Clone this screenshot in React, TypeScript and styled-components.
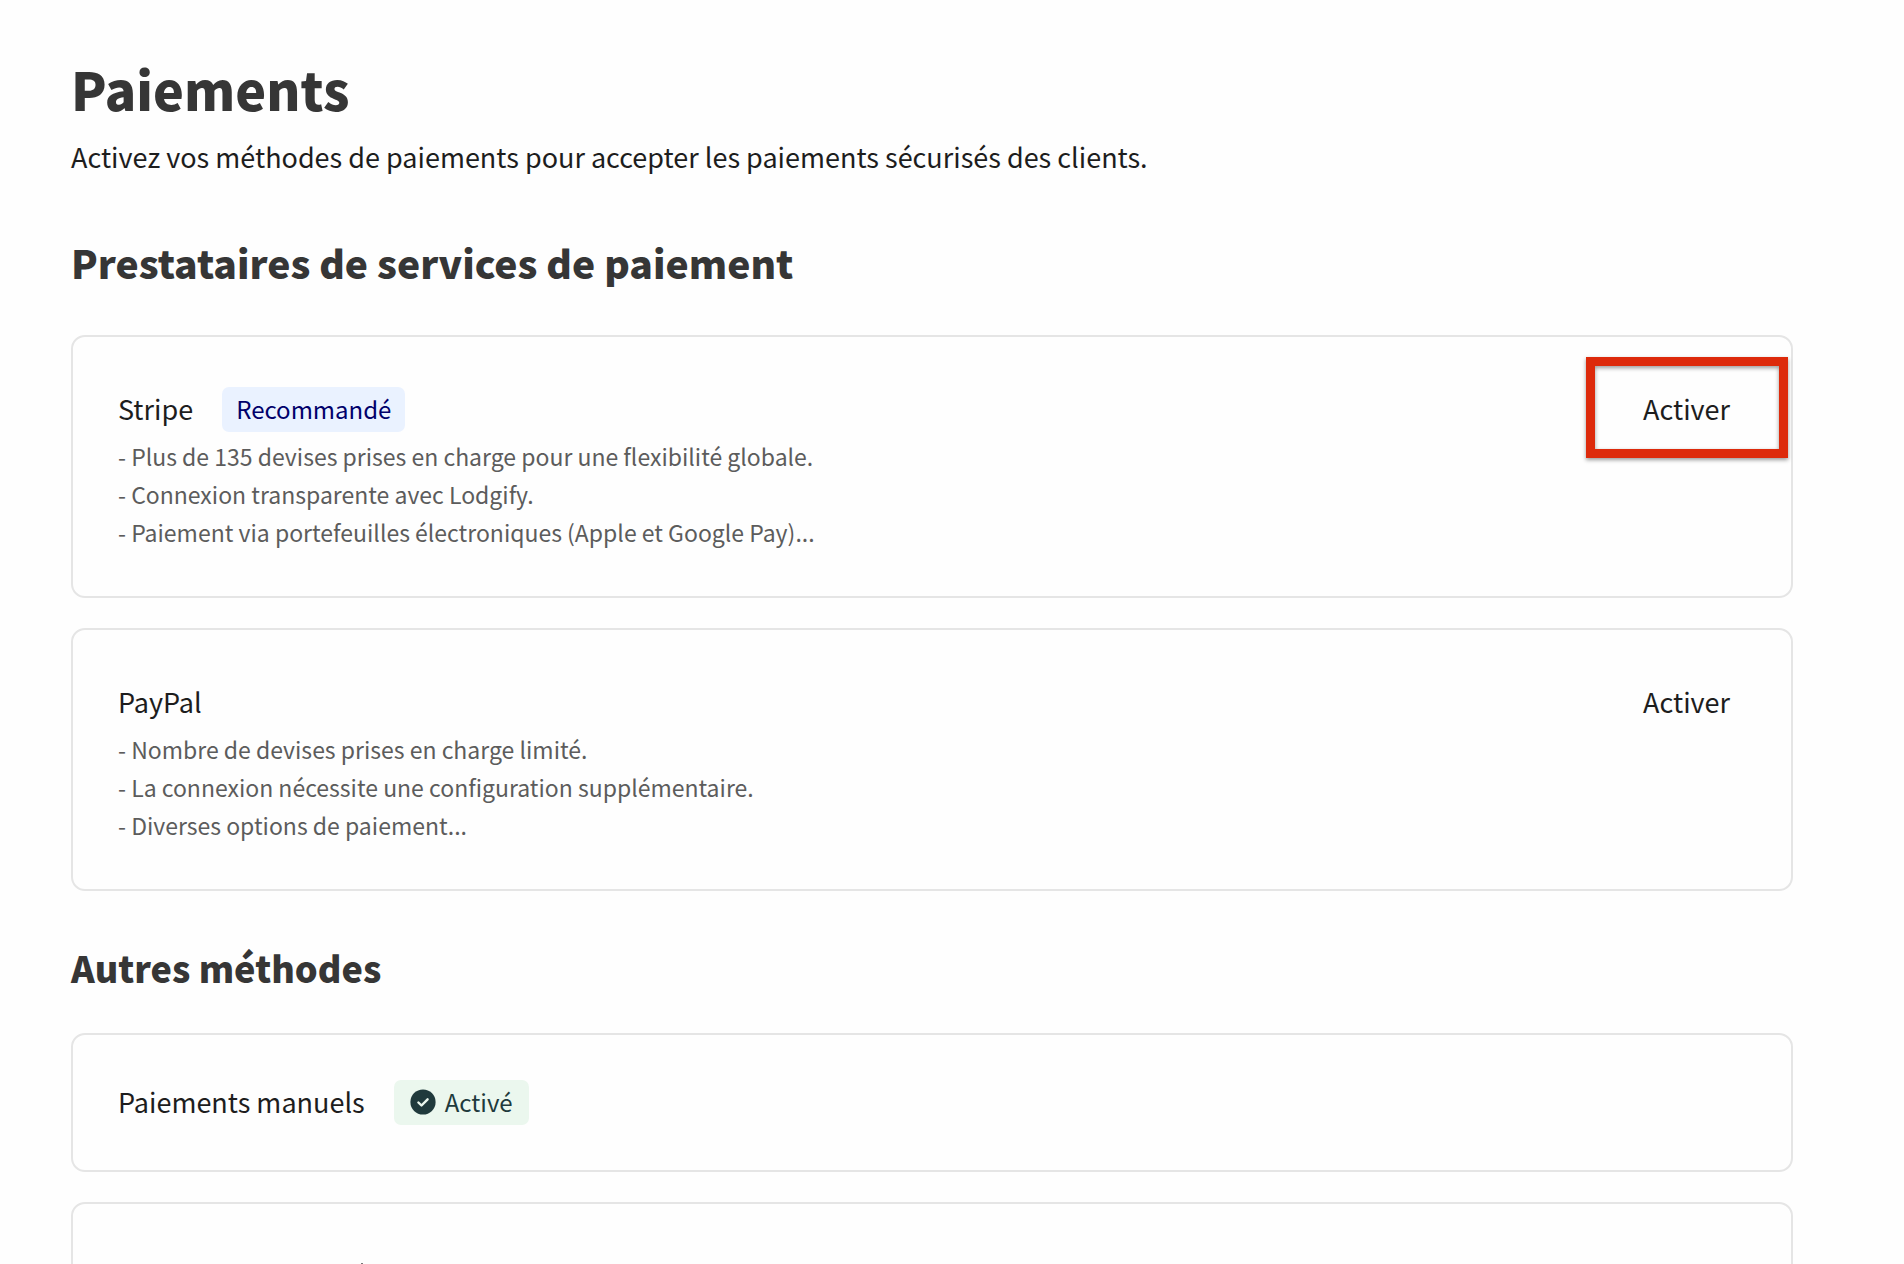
import React from 'react';
import styled, { createGlobalStyle } from 'styled-components';

const GlobalStyle = createGlobalStyle`
  *, *::before, *::after { box-sizing: border-box; }
  body {
    margin: 0;
    background: #fefefe;
    color: #1d1d1d;
    font-family: "Noto Sans CJK SC", "Noto Sans", sans-serif;
    font-size: 27px;
    line-height: 40px;
  }
`;

const Page = styled.main`
  height: 100vh;
  overflow: hidden;
  padding: 57px 111px 0 71px;
`;

const Title = styled.h1`
  margin: 0;
  font-size: 52px;
  line-height: 64px;
  font-weight: 900;
  color: #363636;
`;

const Intro = styled.p`
  margin: 16px 0 0;
`;

const Section = styled.section<{ $gap: number }>`
  margin-top: ${(p) => p.$gap}px;
`;

const Heading = styled.h2<{ $small?: boolean }>`
  margin: 0;
  font-size: ${(p) => (p.$small ? 36 : 39)}px;
  line-height: 56px;
  font-weight: 900;
  color: #363636;
`;

const Cards = styled.div<{ $gap: number }>`
  display: flex;
  flex-direction: column;
  gap: 30px;
  margin-top: ${(p) => p.$gap}px;
`;

const Card = styled.article`
  display: flex;
  align-items: flex-start;
  justify-content: space-between;
  padding: 45px;
  border: 2px solid #e5e5e5;
  border-radius: 14px;
`;

const CardHead = styled.div<{ $tall?: boolean }>`
  display: flex;
  align-items: center;
  gap: 29px;
  min-height: ${(p) => (p.$tall ? 55 : 45)}px;
`;

const Name = styled.h3`
  margin: 0;
  padding-bottom: 2px;
  font-size: 27px;
  line-height: 40px;
  font-weight: 400;
`;

const Badge = styled.span<{ $tone: 'info' | 'success' }>`
  display: inline-flex;
  align-items: center;
  gap: 9px;
  height: 45px;
  padding: 0 ${(p) => (p.$tone === 'info' ? 14 : 16)}px 1px;
  border-radius: 7px;
  font-size: 24px;
  background: ${(p) => (p.$tone === 'info' ? '#eaf2ff' : '#ebf7ee')};
  color: ${(p) => (p.$tone === 'info' ? '#00006b' : '#203a3c')};
`;

const Features = styled.ul`
  margin: 0;
  padding: 0;
  list-style: none;
  font-size: 23px;
  line-height: 38px;
  color: #5c5c5c;
`;

const Action = styled.div`
  position: relative;
`;

const ActivateButton = styled.button`
  height: 55px;
  padding: 0 16px 2px;
  border: 0;
  background: transparent;
  color: inherit;
  font: inherit;
  cursor: pointer;
`;

const Highlight = styled.span`
  position: absolute;
  inset: -25px -42px -21px -41px;
  border: 9px solid #dd2a0b;
  box-shadow: 0 2px 4px rgba(0, 0, 0, 0.4), inset 0 2px 4px rgba(0, 0, 0, 0.4);
  pointer-events: none;
`;

const CutMark = styled.span`
  width: 2px;
  height: 20px;
  margin: 14px 0 0 243px;
  background: #777;
`;

const CheckIcon = () => (
  <svg width="26" height="26" viewBox="0 0 26 26" aria-hidden="true">
    <circle cx="13" cy="13" r="12.6" fill="#203a3c" />
    <path d="M8.4 13.5l3.1 3 6.1-6.2" fill="none" stroke="#ebf7ee" strokeWidth="2.4" strokeLinecap="round" strokeLinejoin="round" />
  </svg>
);

type Provider = { name: string; recommended?: boolean; features: string[] };

const providers: Provider[] = [
  {
    name: 'Stripe',
    recommended: true,
    features: [
      'Plus de 135 devises prises en charge pour une flexibilité globale.',
      'Connexion transparente avec Lodgify.',
      'Paiement via portefeuilles électroniques (Apple et Google Pay)...',
    ],
  },
  {
    name: 'PayPal',
    features: [
      'Nombre de devises prises en charge limité.',
      'La connexion nécessite une configuration supplémentaire.',
      'Diverses options de paiement...',
    ],
  },
];

export default function App() {
  return (
    <>
      <GlobalStyle />
      <Page>
        <Title>Paiements</Title>
        <Intro>Activez vos méthodes de paiements pour accepter les paiements sécurisés des clients.</Intro>

        <Section $gap={57}>
          <Heading>Prestataires de services de paiement</Heading>
          <Cards $gap={45}>
            {providers.map((p) => (
              <Card key={p.name}>
                <div>
                  <CardHead $tall>
                    <Name>{p.name}</Name>
                    {p.recommended && <Badge $tone="info">Recommandé</Badge>}
                  </CardHead>
                  <Features>
                    {p.features.map((f) => (
                      <li key={f}>- {f}</li>
                    ))}
                  </Features>
                </div>
                <Action>
                  <ActivateButton type="button">Activer</ActivateButton>
                  {p.recommended && <Highlight />}
                </Action>
              </Card>
            ))}
          </Cards>
        </Section>

        <Section $gap={48}>
          <Heading $small>Autres méthodes</Heading>
          <Cards $gap={38}>
            <Card>
              <CardHead>
                <Name>Paiements manuels</Name>
                <Badge $tone="success">
                  <CheckIcon />
                  Activé
                </Badge>
              </CardHead>
            </Card>
            <Card>
              <CutMark />
            </Card>
          </Cards>
        </Section>
      </Page>
    </>
  );
}
